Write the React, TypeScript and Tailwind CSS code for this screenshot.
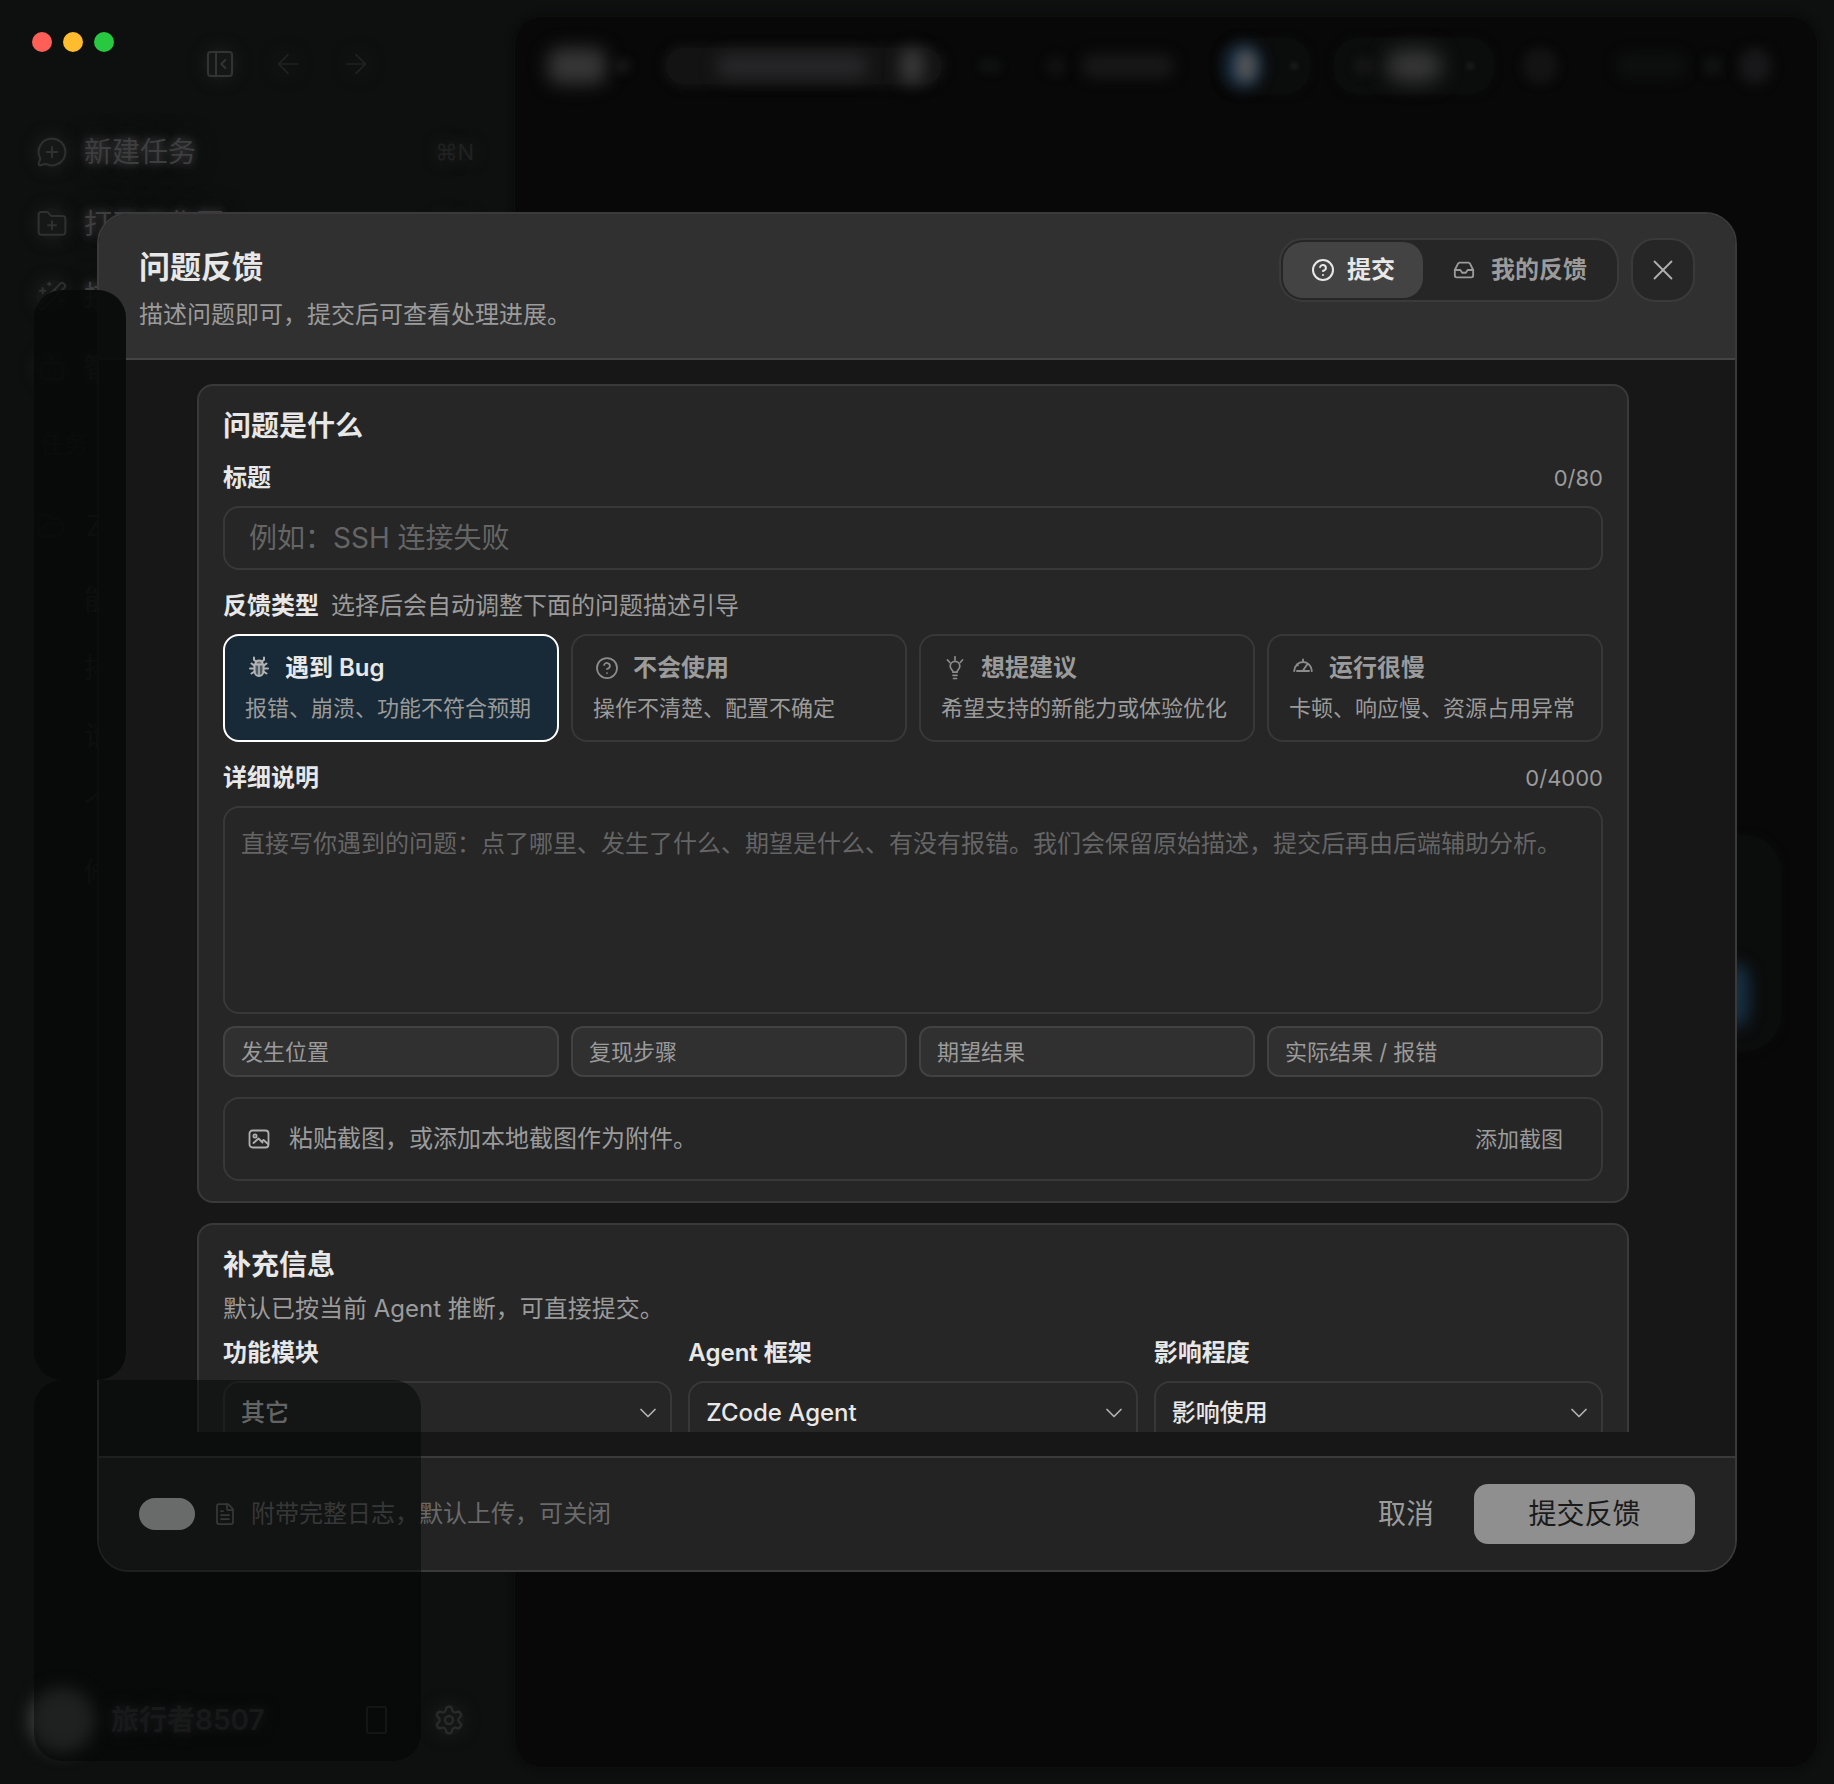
import React, { useState } from 'react';
import {
  ArrowLeft,
  ArrowRight,
  Bot,
  ChevronDown,
  CircleQuestionMark,
  FileText,
  FolderOpen,
  FolderPlus,
  Inbox,
  MessageCirclePlus,
  PanelLeftClose,
  Settings,
  WandSparkles,
  X,
} from 'lucide-react';

const BugIcon: React.FC = () => (
  <svg width="24" height="24" viewBox="0 0 24 24" fill="none" stroke="currentColor" strokeWidth="2" strokeLinecap="round">
    <path d="M7 1.500v2.200l2 1.800M17 1.500v2.200l-2 1.800" />
    <path d="M8.500 8C8.500 5.500 10 4.500 12 4.500s3.500 1 3.500 3.500" fill="currentColor" fillOpacity="0.5" />
    <path d="M7.500 8.500h9v6.500c0 3-2 5-4.500 5s-4.500-2-4.500-5z" fill="currentColor" fillOpacity="0.35" />
    <path d="M12 9v10" strokeWidth="1.600" />
    <path d="M7 9.500 4.500 7.500M7 12.500H3M7.500 15.500 4.500 17.500M17 9.500l2.500-2M17 12.500h4M16.500 15.500l3 2" />
  </svg>
);

const BulbIcon: React.FC = () => (
  <svg width="24" height="24" viewBox="0 0 24 24" fill="none" stroke="currentColor" strokeWidth="1.7" strokeLinecap="round">
    <path d="M12 .8V4M4.500 4l2.300 2.500M19.500 4l-2.300 2.500" />
    <path d="M10 16.200c0-2-2.800-3-2.800-6a4.800 4.800 0 0 1 9.600 0c0 3-2.800 4-2.800 6z" />
    <path d="M10 19.300h4M10.500 22.500h3" />
  </svg>
);

const GaugeIcon: React.FC = () => (
  <svg width="24" height="24" viewBox="0 0 24 24" fill="none" stroke="currentColor" strokeWidth="1.9" strokeLinecap="round" strokeLinejoin="round">
    <path d="M3.200 15c.2-5.200 4-9 8.800-9s8.600 3.800 8.800 9M6 15h12" />
    <path d="M12 14.500 16.500 8" />
    <path d="M12 3.500V6M6 8.500l.8.800" />
  </svg>
);

const PictureIcon: React.FC = () => (
  <svg width="24" height="24" viewBox="0 0 24 24" fill="none" stroke="currentColor" strokeWidth="1.8" strokeLinecap="round" strokeLinejoin="round">
    <rect x="2.500" y="3.500" width="19" height="17" rx="3" />
    <circle cx="8" cy="9" r="1.600" />
    <path d="m6.500 16 5-4.500 4 4M14.500 14.500l2-1.500 4.500 4" />
  </svg>
);

const feedbackTypes = [
  { id: 'bug', title: '遇到 Bug', hint: '报错、崩溃、功能不符合预期', icon: <BugIcon /> },
  { id: 'usage', title: '不会使用', hint: '操作不清楚、配置不确定', icon: <CircleQuestionMark size={24} strokeWidth={1.75} /> },
  { id: 'idea', title: '想提建议', hint: '希望支持的新能力或体验优化', icon: <BulbIcon /> },
  { id: 'slow', title: '运行很慢', hint: '卡顿、响应慢、资源占用异常', icon: <GaugeIcon /> },
];

const promptChips = ['发生位置', '复现步骤', '期望结果', '实际结果 / 报错'];

const extraFields = [
  { id: 'module', label: '功能模块', value: '其它', tone: 'text-[#c4c4c4]' },
  { id: 'agent', label: 'Agent 框架', value: 'ZCode Agent', tone: 'text-[#e8e8e8]' },
  { id: 'impact', label: '影响程度', value: '影响使用', tone: 'text-[#e8e8e8]' },
];

const navItems = [
  { label: '新建任务', shortcut: '⌘N', icon: <MessageCirclePlus size={32} strokeWidth={1.5} /> },
  { label: '打开工作区', shortcut: '⌘O', icon: <FolderPlus size={32} strokeWidth={1.5} /> },
  { label: '技能', shortcut: '', icon: <WandSparkles size={32} strokeWidth={1.5} /> },
  { label: '智能体', shortcut: '', icon: <Bot size={32} strokeWidth={1.5} /> },
];

const recentTasks = ['能', '排', '请', '个', '修'];

const Sidebar: React.FC = () => (
  <aside className="flex w-[514px] shrink-0 flex-col text-[28px] text-[#3e3e3e]">
    <div className="flex h-[116px] items-start pl-8 pt-8">
      <div className="flex gap-[11px]">
        <span className="size-5 rounded-full bg-[#ff5f57]" />
        <span className="size-5 rounded-full bg-[#febc2e]" />
        <span className="size-5 rounded-full bg-[#28c840]" />
      </div>
      <div className="ml-[90px] mt-4 flex gap-9 text-[#222222]">
        <button aria-label="收起侧栏" className="rounded-full bg-[#151616] text-[#333333] shadow-[0_0_12px_4px_#151616]">
          <PanelLeftClose size={32} strokeWidth={1.5} />
        </button>
        <button aria-label="后退" className="drop-shadow-[0_0_10px_#222222]">
          <ArrowLeft size={32} strokeWidth={1.25} />
        </button>
        <button aria-label="前进" className="drop-shadow-[0_0_10px_#222222]">
          <ArrowRight size={32} strokeWidth={1.25} />
        </button>
      </div>
    </div>

    <nav>
      {navItems.map((item) => (
        <button key={item.label} className="flex h-[72px] w-full items-center gap-4 pl-9 pr-10">
          <span className="rounded-full bg-[#161717] text-[#303030] shadow-[0_0_12px_4px_#161717]">{item.icon}</span>
          <span className="[text-shadow:0_0_6px_#2c2c2e,0_0_10px_#2c2c2e,0_0_14px_#2c2c2e,0_0_24px_#262626]">{item.label}</span>
          <span className="ml-auto text-[22px] text-[#202121] [text-shadow:0_0_16px_#262626]">{item.shortcut}</span>
        </button>
      ))}
    </nav>

    <div className="flex h-[82px] items-center pl-10 text-[24px] text-[#202020]">任务</div>
    <div className="flex h-20 items-center gap-5 pl-9">
      <FolderOpen size={30} strokeWidth={1.5} className="text-[#262626]" />
      <span>Z</span>
    </div>
    {recentTasks.map((task) => (
      <div key={task} className="flex h-[68px] items-center pl-[84px]">
        {task}
      </div>
    ))}

    <div className="mb-7 mt-auto flex h-[72px] items-center pl-[29px] pr-[49px]">
      <span className="size-[66px] rounded-full bg-[#3c3c3c] blur-[8px]" />
      <span className="ml-4 font-semibold text-[#2e2e2e] [text-shadow:0_0_8px_#28282a,0_0_16px_#28282a]">旅行者8507</span>
      <button aria-label="移动端" className="ml-auto mr-[46px] h-[28px] w-[21px] rounded-[3px] border-2 border-[#262626]" />
      <button aria-label="设置" className="rounded-full bg-[#141515] text-[#2a2a2a] shadow-[0_0_12px_4px_#141515]">
        <Settings size={32} strokeWidth={1.75} />
      </button>
    </div>
  </aside>
);

// Everything in the workspace is defocused while the dialog is open
const Workspace: React.FC = () => (
  <main className="my-4 mr-4 flex flex-1 flex-col rounded-[28px] border border-[#0e1010] bg-[#080808] shadow-[0_0_6px_2px_#0a0b0a]">
    <div className="flex h-[98px] items-center pl-[33px] pr-[46px]">
      <span className="h-9 w-[58px] rounded-xl bg-[#363636] blur-[9px]" />
      <span className="ml-2 size-4 rounded-full bg-[#161616] blur-[4px]" />
      <div className="ml-9 flex h-9 w-[276px] items-center rounded-full bg-[#131313] pl-[50px] shadow-[0_0_8px_4px_#121212]">
        <span className="h-6 w-[152px] rounded-full bg-[#272729] blur-[8px]" />
        <span className="ml-8 h-9 w-6 rounded-full bg-[#383838] blur-[8px]" />
      </div>
      <span className="ml-9 h-4 w-6 rounded-full bg-[#0e0f0f] blur-[3px]" />
      <span className="ml-11 size-5 rounded-full bg-[#111111] blur-[5px]" />
      <span className="ml-4 h-6 w-[92px] rounded-full bg-[#181818] blur-[7px]" />
      <div className="ml-11 flex h-14 w-[92px] items-center gap-7 rounded-3xl bg-[#0b0c0c] pl-2 shadow-[0_0_8px_#0b0c0c]">
        <span className="flex h-11 w-9 items-center justify-center rounded-full bg-[#16304a] blur-[7px]">
          <span className="ml-1 h-8 w-5 rounded-full bg-[#565656]" />
        </span>
        <span className="size-2 rounded-full bg-[#1a1a1a] blur-[2px]" />
      </div>
      <div className="ml-6 flex h-14 w-[160px] items-center rounded-3xl bg-[#0b0c0c] pl-5 shadow-[0_0_8px_#0b0c0c]">
        <span className="size-5 rounded-full bg-[#151515] blur-[4px]" />
        <span className="ml-3 h-8 w-14 rounded-full bg-[#383838] blur-[10px]" />
        <span className="ml-6 size-2 rounded-full bg-[#1a1a1a] blur-[2px]" />
      </div>
      <span className="ml-7 size-9 rounded-full bg-[#131313] blur-[5px]" />
      <span className="ml-auto h-7 w-[72px] rounded-full bg-[#0d0e0e] blur-[6px]" />
      <span className="ml-4 size-5 rounded-full bg-[#101111] blur-[4px]" />
      <span className="ml-4 h-9 w-8 rounded-full bg-[#18181a] blur-[6px]" />
    </div>
    <div className="ml-auto mr-9 mt-[720px] flex h-[216px] w-4/5 items-end justify-end rounded-[36px] bg-[#0b0c0c] pb-6 pr-8 shadow-[0_0_8px_#0b0c0c]">
      <span className="size-16 rounded-2xl bg-[#163044] blur-[8px]" />
    </div>
  </main>
);

const FeedbackDialog: React.FC = () => {
  const [selectedType, setSelectedType] = useState('bug');
  const [title, setTitle] = useState('');
  const [detail, setDetail] = useState('');

  return (
    <section
      role="dialog"
      aria-labelledby="feedback-title"
      className="flex max-h-[1360px] w-full max-w-[1640px] flex-col overflow-hidden rounded-[32px] border-2 border-[#3a3a3a] bg-[#171717] text-[24px] leading-8 text-[#e8e8e8]"
    >
      <header className="flex h-[146px] shrink-0 items-start justify-between border-b-2 border-[#444444] bg-[#303030] px-10 pt-6">
        <div className="pt-[9px]">
          <h1 id="feedback-title" className="text-[31px] font-semibold leading-10">问题反馈</h1>
          <p className="mt-3 text-[#9b9b9b]">描述问题即可，提交后可查看处理进展。</p>
        </div>
        <div className="flex gap-3">
          <div className="flex h-16 gap-0.5 rounded-3xl border-2 border-[#3a3a3a] bg-[#262626] p-0.5 font-semibold">
            <button className="flex items-center gap-3 rounded-[20px] bg-[#434343] px-7">
              <CircleQuestionMark size={24} strokeWidth={2} />
              提交
            </button>
            <button className="flex items-center gap-4 rounded-[20px] px-7 text-[#9b9b9b]">
              <Inbox size={22} strokeWidth={2} />
              我的反馈
            </button>
          </div>
          <button
            aria-label="关闭"
            className="flex size-16 items-center justify-center rounded-3xl border-2 border-[#3a3a3a] bg-[#262626] text-[#b0b0b0]"
          >
            <X size={34} strokeWidth={1.25} />
          </button>
        </div>
      </header>

      <div className="flex min-h-0 flex-1 flex-col px-10 py-6">
        <div className="min-h-0 flex-1 overflow-y-auto pr-2 [scrollbar-width:none]">
          <div className="mx-auto flex max-w-[1432px] flex-col gap-5">
            <section className="rounded-2xl border-2 border-[#393939] bg-[#262626] px-6 py-5">
              <h2 className="text-[28px] font-semibold leading-10">问题是什么</h2>

              <div className="mb-3 mt-4 flex items-center justify-between">
                <label htmlFor="issue-title" className="font-semibold">标题</label>
                <span className="text-[22px] text-[#9b9b9b]">{title.length}/80</span>
              </div>
              <input
                id="issue-title"
                type="text"
                maxLength={80}
                value={title}
                onChange={(e) => setTitle(e.target.value)}
                placeholder="例如：SSH 连接失败"
                className="block h-16 w-full rounded-2xl border-2 border-[#383838] bg-transparent px-6 text-[28px] outline-none placeholder:text-[#656565]"
              />

              <div className="mb-3 mt-5 flex items-center gap-3">
                <span className="font-semibold">反馈类型</span>
                <span className="text-[#9b9b9b]">选择后会自动调整下面的问题描述引导</span>
              </div>
              <div className="grid grid-cols-4 gap-3">
                {feedbackTypes.map((type) => {
                  const active = type.id === selectedType;
                  return (
                    <button
                      key={type.id}
                      onClick={() => setSelectedType(type.id)}
                      aria-pressed={active}
                      className={`flex h-[108px] flex-col justify-center gap-2 rounded-2xl border-2 px-5 text-left ${
                        active ? 'border-white bg-[#182a37]' : 'border-[#383838] text-[#9b9b9b]'
                      }`}
                    >
                      <span className="flex items-center gap-3 font-semibold">
                        <span className={`flex w-7 justify-center ${active ? 'text-[#b4b4b4]' : 'text-[#8c8c8c]'}`}>
                          {type.icon}
                        </span>
                        {type.title}
                      </span>
                      <span className="whitespace-nowrap text-[22px] text-[#9b9b9b]">{type.hint}</span>
                    </button>
                  );
                })}
              </div>

              <div className="mb-3 mt-5 flex items-center justify-between">
                <label htmlFor="issue-detail" className="font-semibold">详细说明</label>
                <span className="text-[22px] text-[#9b9b9b]">{detail.length}/4000</span>
              </div>
              <textarea
                id="issue-detail"
                maxLength={4000}
                value={detail}
                onChange={(e) => setDetail(e.target.value)}
                placeholder="直接写你遇到的问题：点了哪里、发生了什么、期望是什么、有没有报错。我们会保留原始描述，提交后再由后端辅助分析。"
                className="block h-[208px] w-full resize-none rounded-2xl border-2 border-[#383838] bg-transparent px-4 py-5 outline-none placeholder:text-[#656565]"
              />
              <div className="mt-3 grid grid-cols-4 gap-3">
                {promptChips.map((chip) => (
                  <button
                    key={chip}
                    className="h-[51px] rounded-xl border-2 border-[#424242] bg-[#303030] px-4 text-left text-[22px] text-[#9b9b9b]"
                  >
                    {chip}
                  </button>
                ))}
              </div>

              <div className="mt-5 flex h-[84px] items-center gap-4 rounded-2xl border-2 border-[#383838] px-5 text-[#9b9b9b]">
                <span className="flex w-7 justify-center text-[#b0b0b0]">
                  <PictureIcon />
                </span>
                <span>粘贴截图，或添加本地截图作为附件。</span>
                <button className="ml-auto px-[18px] text-[22px]">添加截图</button>
              </div>
            </section>

            <section className="rounded-2xl border-2 border-[#393939] bg-[#262626] px-6 py-5">
              <h2 className="text-[28px] font-semibold leading-10">补充信息</h2>
              <p className="mt-2 text-[#9b9b9b]">默认已按当前 Agent 推断，可直接提交。</p>
              <div className="mt-3 grid grid-cols-3 gap-4">
                {extraFields.map((field) => (
                  <div key={field.id}>
                    <label htmlFor={field.id} className="block font-semibold">{field.label}</label>
                    <div className="relative mt-3">
                      <select
                        id={field.id}
                        className={`h-16 w-full appearance-none rounded-2xl border-2 border-[#383838] bg-[#262626] px-4 font-medium outline-none ${field.tone}`}
                      >
                        <option>{field.value}</option>
                      </select>
                      <ChevronDown
                        size={28}
                        strokeWidth={1.5}
                        className="pointer-events-none absolute right-[10px] top-[18px] text-[#b0b0b0]"
                      />
                    </div>
                  </div>
                ))}
              </div>
            </section>
          </div>
        </div>
      </div>

      <footer className="flex h-[114px] shrink-0 items-center border-t-2 border-[#3a3a3a] bg-[#232323] px-10">
        <input
          id="attach-logs"
          type="checkbox"
          role="switch"
          defaultChecked
          className="h-8 w-14 appearance-none rounded-full bg-[#d0d0d0]"
        />
        <label htmlFor="attach-logs" className="ml-4 flex items-center gap-3 text-[#6a6a6a]">
          <span className="flex w-7 justify-center">
            <FileText size={24} strokeWidth={1.75} />
          </span>
          附带完整日志，默认上传，可关闭
        </label>
        <button className="ml-auto text-[28px] text-[#9b9b9b]">取消</button>
        <button className="ml-10 h-[60px] w-[221px] rounded-[14px] bg-[#8f8f8f] text-[28px] text-[#1a1a1a]">提交反馈</button>
      </footer>
    </section>
  );
};

const App: React.FC = () => (
  <div className="relative flex h-screen overflow-hidden bg-[#0e100f] font-[Inter,'Noto_Sans_CJK_SC',sans-serif]">
    <Sidebar />
    <Workspace />

    <div className="absolute inset-0 flex items-center justify-center px-[97px]">
      <FeedbackDialog />
    </div>

    {/* Dimmed regions of the sidebar sit on top of the dialog */}
    <div className="pointer-events-none absolute left-[34px] top-[290px] h-[1090px] w-[92px] rounded-[28px] bg-[#080a09]/90" />
    <div className="pointer-events-none absolute left-[34px] top-[1380px] h-[381px] w-[387px] rounded-[28px] bg-[#020403]/50" />
  </div>
);

export default App;
